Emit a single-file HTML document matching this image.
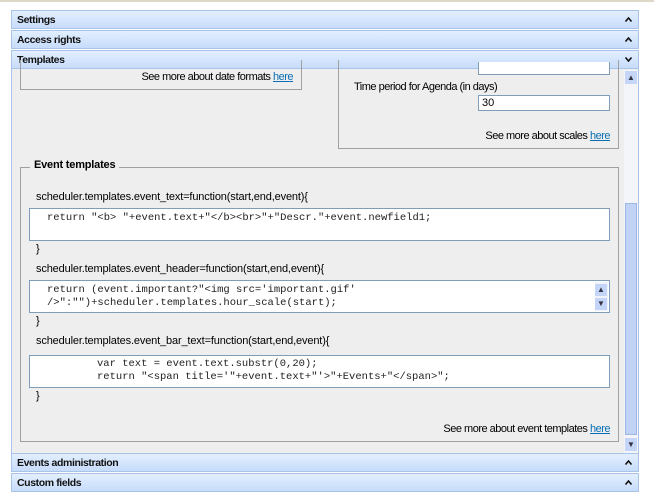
<!DOCTYPE html>
<html><head><style>
body{margin:0;width:654px;height:500px;background:#fff;font-family:"Liberation Sans",sans-serif;font-size:11px;color:#000;position:relative;overflow:hidden}
.a{position:absolute}
.hdr{position:absolute;left:11px;width:628px;height:19px;background:linear-gradient(#e3efff,#c7dcfb);border:1px solid #a9c4e9;box-sizing:border-box;font-weight:bold;font-size:10.5px;letter-spacing:-0.4px;line-height:18px;padding-left:5px;color:#111}
.hdr svg{position:absolute;right:6px;top:6px}
.box{position:absolute;border:1px solid #a0a0a0;box-sizing:border-box}
.ta{position:absolute;left:29px;width:581px;background:#fff;border:1px solid #7f9db9;box-sizing:border-box;font-family:"Liberation Mono",monospace;font-size:10.5px;line-height:13px;color:#222}
.t{position:absolute;font-size:11px;white-space:nowrap;letter-spacing:-0.5px}
.c{letter-spacing:-0.15px}
a{color:#0a6fb5;text-decoration:underline}
</style></head><body>
<div class="a" style="left:0;top:0;width:654px;height:2px;background:#ddd8c8"></div>
<div class="a" style="left:11px;top:69px;width:628px;height:385px;background:#eeeeee;border-left:1px solid #a9c4e9;border-right:1px solid #a9c4e9;box-sizing:border-box"></div>
<div class="hdr" style="top:10px">Settings<svg width="7" height="5"><path d="M0.5 4.5L3.5 1L6.5 4.5" stroke="#111" stroke-width="1.6" fill="none"/></svg></div>
<div class="hdr" style="top:30px">Access rights<svg width="7" height="5"><path d="M0.5 4.5L3.5 1L6.5 4.5" stroke="#111" stroke-width="1.6" fill="none"/></svg></div>
<div class="hdr" style="top:50px">Templates<svg width="7" height="5"><path d="M0.5 0.5L3.5 4L6.5 0.5" stroke="#111" stroke-width="1.6" fill="none"/></svg></div>
<div class="box" style="left:20px;top:60px;width:282px;height:30px;border-top:none"></div>
<div class="t" style="right:361px;top:71px">See more about date formats <a>here</a></div>
<div class="box" style="left:338px;top:60px;width:281px;height:89px;border-top:none"></div>
<div class="a" style="left:478px;top:62px;width:132px;height:13px;background:#fff;border:1px solid #7f9db9;border-top:none;box-sizing:border-box"></div>
<div class="t" style="left:354px;top:81px">Time period for Agenda (in days)</div>
<div class="a" style="left:478px;top:95px;width:132px;height:16px;background:#fff;border:1px solid #7f9db9;box-sizing:border-box;padding-left:3px;line-height:14px">30</div>
<div class="t" style="right:44px;top:130px">See more about scales <a>here</a></div>
<div class="box" style="left:20px;top:167px;width:599px;height:275px"></div>
<div class="t" style="left:30px;top:159px;background:#eee;padding:0 4px;font-weight:bold;font-size:11px;letter-spacing:-0.2px">Event templates</div>
<div class="t c" style="left:36px;top:191px">scheduler.templates.event_text=function(start,end,event){</div>
<div class="ta" style="top:208px;height:33px;padding:3px 0 0 17px">return "&lt;b&gt; "+event.text+"&lt;/b&gt;&lt;br&gt;"+"Descr."+event.newfield1;</div>
<div class="t" style="left:36px;top:243px">}</div>
<div class="t c" style="left:36px;top:263px">scheduler.templates.event_header=function(start,end,event){</div>
<div class="ta" style="top:280px;height:33px;padding:3px 0 0 17px">return (event.important?"&lt;img src='important.gif'<br>/&gt;":"")+scheduler.templates.hour_scale(start);</div>
<div class="a" style="left:595px;top:282px;width:13px;height:29px;background:#eef3fc"></div>
<div class="a" style="left:595px;top:284px;width:12px;height:12px;background:#c4d5f7;font-size:8px;text-align:center;line-height:12px;color:#334">&#9650;</div>
<div class="a" style="left:595px;top:298px;width:12px;height:12px;background:#c4d5f7;font-size:8px;text-align:center;line-height:12px;color:#334">&#9660;</div>
<div class="t" style="left:36px;top:315px">}</div>
<div class="t c" style="left:36px;top:335px">scheduler.templates.event_bar_text=function(start,end,event){</div>
<div class="ta" style="top:355px;height:33px;padding:2px 0 0 67px">var text = event.text.substr(0,20);<br>return "&lt;span title='"+event.text+"'&gt;"+Events+"&lt;/span&gt;";</div>
<div class="t" style="left:36px;top:390px">}</div>
<div class="t" style="right:44px;top:423px">See more about event templates <a>here</a></div>
<div class="a" style="left:624px;top:70px;width:14px;height:383px;background:#f3f5fa"></div>
<div class="a" style="left:625px;top:71px;width:12px;height:13px;background:#c4d5f7;font-size:8px;text-align:center;line-height:13px;color:#334">&#9650;</div>
<div class="a" style="left:625px;top:203px;width:12px;height:232px;background:#c0d3f5;border:1px solid #9db6e4;box-sizing:border-box"></div>
<div class="a" style="left:625px;top:438px;width:12px;height:13px;background:#c4d5f7;font-size:8px;text-align:center;line-height:13px;color:#334">&#9660;</div>
<div class="hdr" style="top:453px">Events administration<svg width="7" height="5"><path d="M0.5 4.5L3.5 1L6.5 4.5" stroke="#111" stroke-width="1.6" fill="none"/></svg></div>
<div class="hdr" style="top:473px">Custom fields<svg width="7" height="5"><path d="M0.5 4.5L3.5 1L6.5 4.5" stroke="#111" stroke-width="1.6" fill="none"/></svg></div>
</body></html>
